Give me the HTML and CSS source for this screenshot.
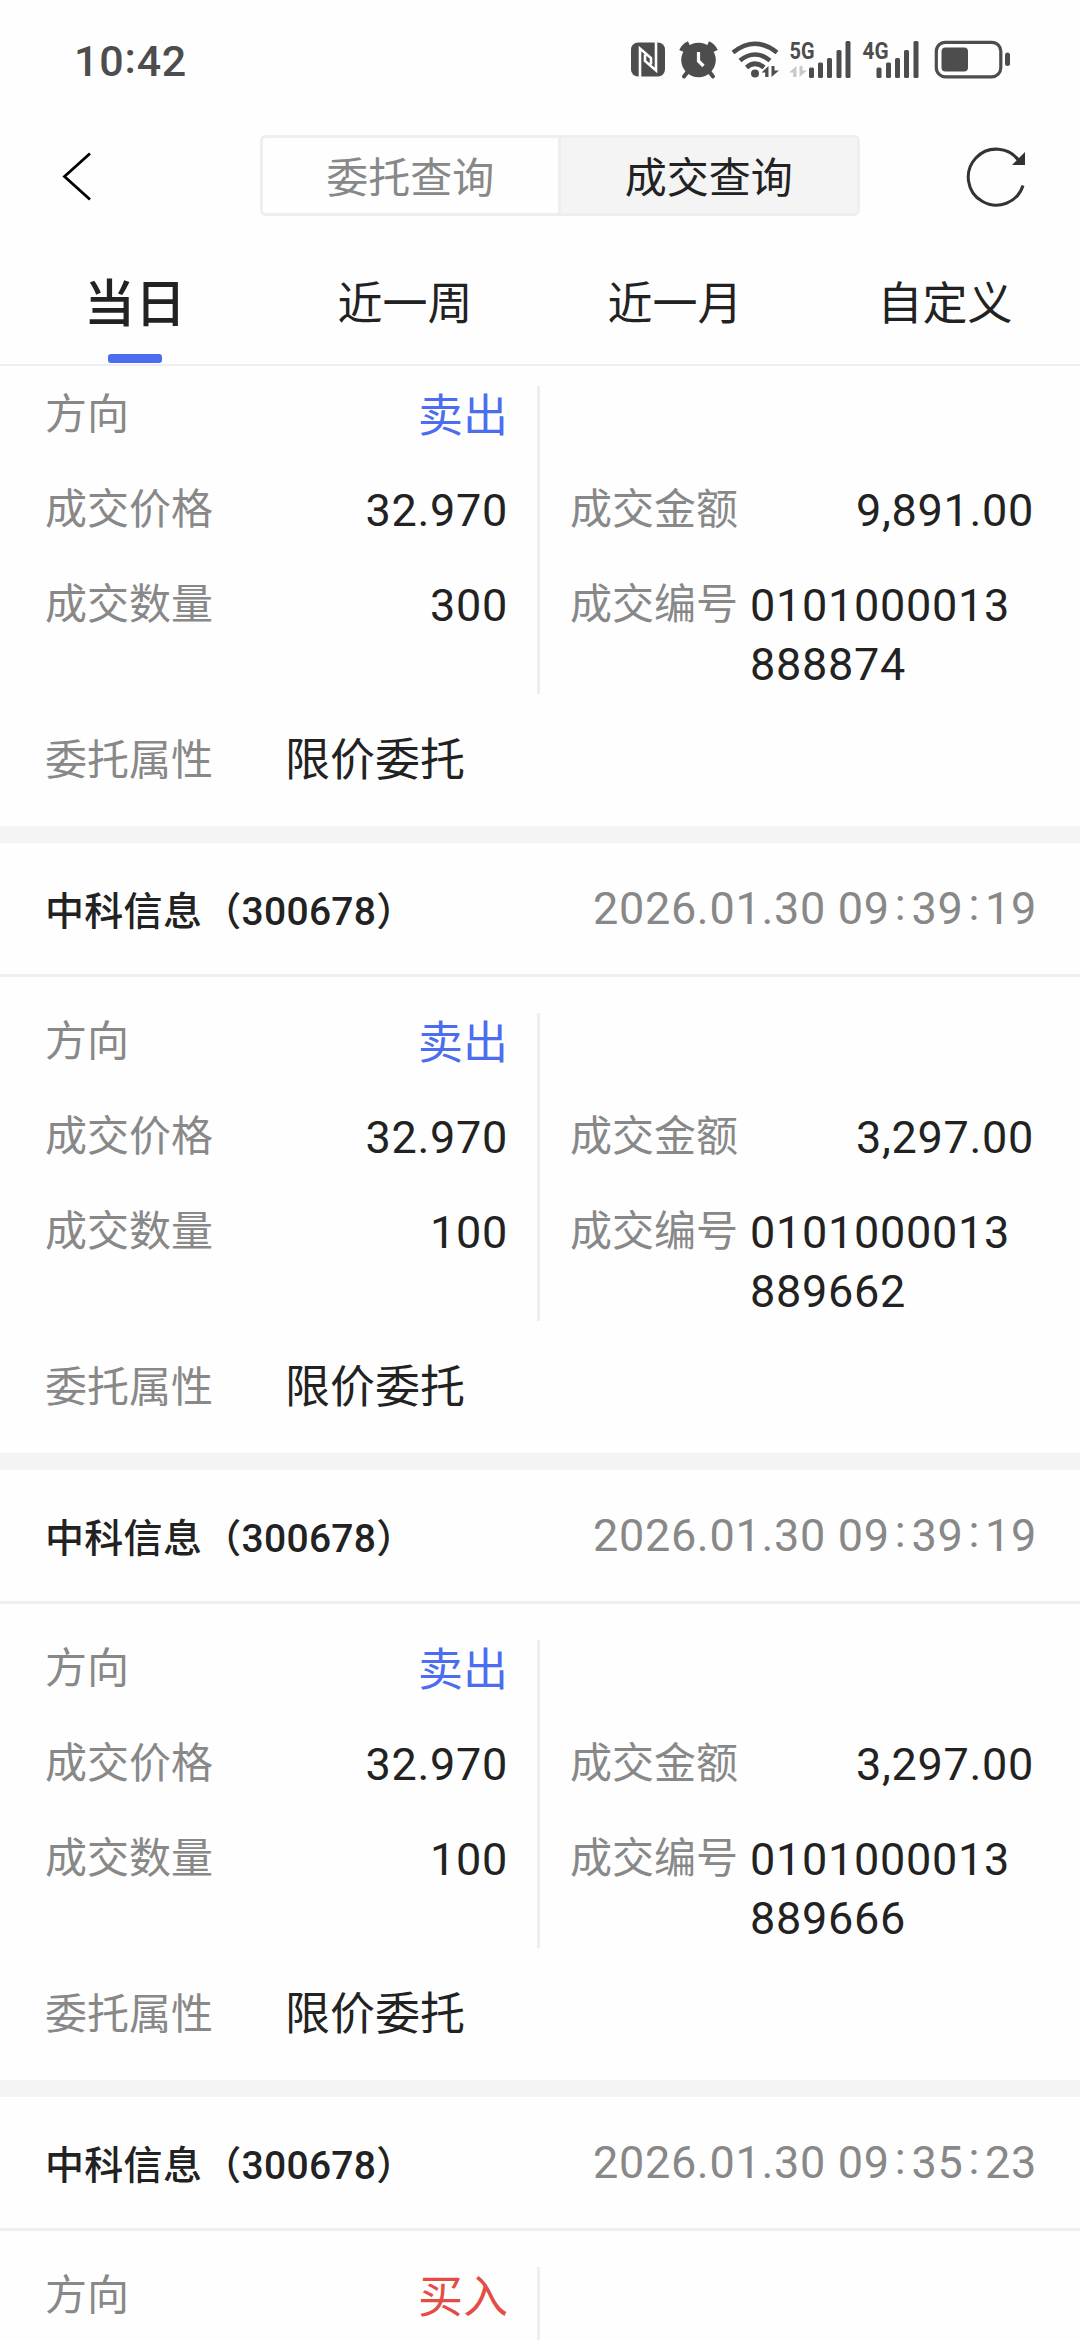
FILE: index.html
```
<!DOCTYPE html>
<html lang="zh-CN">
<head>
    <meta charset="UTF-8">
    <meta name="viewport" content="width=device-width, initial-scale=1.0">
    <title>成交查询</title>
    <link rel="stylesheet" href="styles.css">
</head>
<body>
    <div class="status-bar">
        <div class="clock">10<span class="colon">:</span>42</div>
        <div class="status-icons">
            <!-- NFC -->
            <svg class="nfc" width="34" height="40" viewBox="0 0 34 40">
                <rect x="0" y="2.5" width="34" height="34" rx="7" fill="#4d4d4d"/>
                <path d="M9 37V8.500L20 18V24.500M25 2V30.500L14 21V14.500" fill="none" stroke="#fefefe" stroke-width="2.600"/>
            </svg>
            <!-- alarm -->
            <svg class="alarm" width="39" height="40" viewBox="0 0 39 40">
                <circle cx="19.500" cy="20" r="17.300" fill="#4d4d4d"/>
                <path d="M2.500 11A15 15 0 0 1 10 3.500M29 3.500A15 15 0 0 1 36.500 11" fill="none" stroke="#4d4d4d" stroke-width="5"/>
                <path d="M8.500 32L5 36.500M30.500 32L34 36.500" stroke="#4d4d4d" stroke-width="4" stroke-linecap="round"/>
                <path d="M19.500 12V21L24.500 26" fill="none" stroke="#fefefe" stroke-width="3.200"/>
            </svg>
            <!-- wifi -->
            <svg class="wifi" width="49" height="40" viewBox="0 0 49 40">
                <g fill="none" stroke="#4d4d4d" stroke-width="4.600">
                    <path d="M2 12.500Q24 -5 46 12.500"/>
                    <path d="M9 20.500Q24 8.500 39 20.500"/>
                    <path d="M15.500 27.500Q24 20 33 27.500"/>
                </g>
                <circle cx="24" cy="33.500" r="4" fill="#4d4d4d"/>
                <path d="M37.500 26V37H34.200V32.500H30.500ZM40.500 37V26H43.500V30.500H48Z" fill="#4d4d4d"/>
            </svg>
            <!-- 5G signal -->
            <svg class="signal-5g" width="63" height="40" viewBox="0 0 63 40">
                <text x="0.500" y="18.500" class="net" textLength="25" lengthAdjust="spacingAndGlyphs">5G</text>
                <path d="M7.500 26V37H4.200V32.500H0ZM10.500 37V26H13.500V30.500H18Z" fill="#c9c9c9"/>
                <g fill="#4d4d4d">
                    <rect x="20" y="27.500" width="5" height="10.500" rx="1.500"/>
                    <rect x="29" y="22.500" width="5" height="15.500" rx="1.500"/>
                    <rect x="38" y="18" width="5" height="20" rx="1.500"/>
                    <rect x="47.500" y="10" width="5" height="28" rx="1.500"/>
                    <rect x="56.500" y="1" width="5" height="37" rx="1.500"/>
                </g>
            </svg>
            <!-- 4G signal -->
            <svg class="signal-4g" width="58" height="40" viewBox="0 0 58 40">
                <text x="0.500" y="18.500" class="net" textLength="26" lengthAdjust="spacingAndGlyphs">4G</text>
                <g fill="#4d4d4d">
                    <rect x="14.500" y="27.500" width="5" height="10.500" rx="1.500"/>
                    <rect x="24" y="22.500" width="5" height="15.500" rx="1.500"/>
                    <rect x="33" y="18" width="5" height="20" rx="1.500"/>
                    <rect x="42" y="10" width="5" height="28" rx="1.500"/>
                    <rect x="51.500" y="1" width="5" height="37" rx="1.500"/>
                </g>
            </svg>
            <!-- battery -->
            <svg class="battery" width="77" height="40" viewBox="0 0 77 40">
                <rect x="2.300" y="2.300" width="64.500" height="34.500" rx="9" fill="none" stroke="#4d4d4d" stroke-width="3.200"/>
                <rect x="7.500" y="7.500" width="26.500" height="24" rx="4" fill="#4d4d4d"/>
                <rect x="71" y="12.500" width="5" height="13.500" rx="2.500" fill="#4d4d4d"/>
            </svg>
        </div>
    </div>

    <div class="nav-bar">
        <svg class="back" width="30" height="50" viewBox="0 0 30 50">
            <path d="M28 2.500L2.500 25.500L28 48.500" fill="none" stroke="#000" stroke-width="2.800"/>
        </svg>
        <div class="segment">
            <div class="segment-item">委托查询</div>
            <div class="segment-item active">成交查询</div>
        </div>
        <svg class="refresh" width="60" height="62" viewBox="0 0 60 62">
            <path d="M56 40.500A28 28 0 1 1 52.500 16.500" fill="none" stroke="#333" stroke-width="3"/>
            <path d="M58 7V20H45Z" fill="#333"/>
        </svg>
    </div>

    <div class="tabs">
        <div class="tab active">当日</div>
        <div class="tab">近一周</div>
        <div class="tab">近一月</div>
        <div class="tab">自定义</div>
    </div>

    <div class="list">
        <div class="card scrolled">
            <div class="detail">
                <div class="col left">
                    <div class="row"><span class="label">方向</span><span class="value sell">卖出</span></div>
                    <div class="row"><span class="label">成交价格</span><span class="value">32.970</span></div>
                    <div class="row"><span class="label">成交数量</span><span class="value">300</span></div>
                </div>
                <div class="col right">
                    <div class="row"></div>
                    <div class="row"><span class="label">成交金额</span><span class="value">9,891.00</span></div>
                    <div class="row"><span class="label">成交编号</span><span class="value serial">0101000013888874</span></div>
                </div>
            </div>
            <div class="attr"><span class="label">委托属性</span><span class="value">限价委托</span></div>
        </div>

        <div class="card">
            <div class="card-head">
                <span class="stock">中科信息（300678）</span>
                <span class="time">2026.01.30 09<i>:</i>39<i>:</i>19</span>
            </div>
            <div class="detail">
                <div class="col left">
                    <div class="row"><span class="label">方向</span><span class="value sell">卖出</span></div>
                    <div class="row"><span class="label">成交价格</span><span class="value">32.970</span></div>
                    <div class="row"><span class="label">成交数量</span><span class="value">100</span></div>
                </div>
                <div class="col right">
                    <div class="row"></div>
                    <div class="row"><span class="label">成交金额</span><span class="value">3,297.00</span></div>
                    <div class="row"><span class="label">成交编号</span><span class="value serial">0101000013889662</span></div>
                </div>
            </div>
            <div class="attr"><span class="label">委托属性</span><span class="value">限价委托</span></div>
        </div>

        <div class="card">
            <div class="card-head">
                <span class="stock">中科信息（300678）</span>
                <span class="time">2026.01.30 09<i>:</i>39<i>:</i>19</span>
            </div>
            <div class="detail">
                <div class="col left">
                    <div class="row"><span class="label">方向</span><span class="value sell">卖出</span></div>
                    <div class="row"><span class="label">成交价格</span><span class="value">32.970</span></div>
                    <div class="row"><span class="label">成交数量</span><span class="value">100</span></div>
                </div>
                <div class="col right">
                    <div class="row"></div>
                    <div class="row"><span class="label">成交金额</span><span class="value">3,297.00</span></div>
                    <div class="row"><span class="label">成交编号</span><span class="value serial">0101000013889666</span></div>
                </div>
            </div>
            <div class="attr"><span class="label">委托属性</span><span class="value">限价委托</span></div>
        </div>

        <div class="card">
            <div class="card-head">
                <span class="stock">中科信息（300678）</span>
                <span class="time">2026.01.30 09<i>:</i>35<i>:</i>23</span>
            </div>
            <div class="detail">
                <div class="col left">
                    <div class="row"><span class="label">方向</span><span class="value buy">买入</span></div>
                </div>
            </div>
        </div>
    </div>
</body>
</html>
```
FILE: styles.css
```
* {
    box-sizing: border-box;
    margin: 0;
    padding: 0;
}

body {
    display: flex;
    flex-direction: column;
    width: 1080px;
    height: 2340px;
    overflow: hidden;
    background: #fefefe;
    color: #222;
    font-family: Roboto, "Noto Sans CJK SC", sans-serif;
}

svg {
    display: block;
    flex: none;
    overflow: visible;
}

/* status bar */
.status-bar {
    display: flex;
    justify-content: space-between;
    height: 120px;
    padding: 40px 69px 0 74px;
}

.clock {
    height: 40px;
    line-height: 40px;
    margin-top: -3px;
    font-size: 43px;
    font-weight: 500;
    letter-spacing: 0.8px;
    color: #4d4d4d;
}

.clock .colon {
    vertical-align: 3px;
    line-height: 1;
}

.status-icons {
    display: flex;
}

.alarm {
    margin-left: 14px;
}

.wifi {
    margin-left: 13px;
}

.signal-5g {
    margin-left: 9px;
}

.signal-4g {
    margin-left: 10px;
}

.battery {
    margin-left: 14px;
}

.net {
    font-size: 24px;
    font-weight: 700;
    fill: #4d4d4d;
}

/* title bar */
.nav-bar {
    display: flex;
    align-items: center;
    justify-content: space-between;
    height: 111px;
    padding: 0 53px 0 62px;
}

.segment {
    display: flex;
    width: 600px;
    height: 81px;
    margin-left: 60px;
    border: 3px solid #eee;
    border-radius: 6px;
}

.segment-item {
    flex: 1;
    height: 75px;
    font-size: 42px;
    line-height: 82px;
    text-align: center;
    color: #888;
}

.segment-item.active {
    border-left: 3px solid #eee;
    background: #f4f4f4;
    color: #222;
}

/* period tabs */
.tabs {
    display: flex;
    height: 135px;
    border-bottom: 2px solid #eee;
}

.tab {
    position: relative;
    flex: 1;
    padding-top: 38px;
    font-size: 45px;
    line-height: 71px;
    text-align: center;
}

.tab.active {
    font-size: 51px;
    font-weight: 500;
}

.tab.active::after {
    content: "";
    position: absolute;
    left: 108px;
    bottom: 1px;
    width: 54px;
    height: 9px;
    border-radius: 3px;
    background: #4c6df0;
}

/* deals */
.list {
    flex: 1;
    overflow: hidden;
}

.card {
    height: 627px;
    border-bottom: 17px solid #f4f4f4;
}

.card.scrolled {
    height: 477px;
    padding-top: 20px;
}

.card-head {
    display: flex;
    align-items: center;
    justify-content: space-between;
    height: 134px;
    margin-bottom: 36px;
    padding: 0 43px 0 45px;
    border-bottom: 3px solid #eee;
}

.stock {
    padding-bottom: 2px;
    font-size: 39px;
    font-weight: 500;
    letter-spacing: 0.3px;
}

.time {
    font-size: 45px;
    letter-spacing: 0.7px;
    color: #888;
}

.time i {
    padding: 0 5px;
    font-style: normal;
    line-height: 1;
    vertical-align: 4px;
}

.detail {
    display: flex;
    height: 308px;
}

.col {
    display: flex;
    flex-direction: column;
    gap: 36px;
}

.col.left {
    width: 540px;
    padding: 0 29px 0 45px;
    border-right: 3px solid #eee;
}

.col.right {
    width: 540px;
    padding: 0 46px 0 30px;
}

/* the serial number wraps below its row */
.row {
    display: flex;
    justify-content: space-between;
    height: 59px;
    line-height: 59px;
}

.row .label {
    line-height: 57px;
}

.label {
    flex: none;
    font-size: 42px;
    color: #888;
}

.value {
    font-size: 45px;
    letter-spacing: 0.7px;
}

.serial {
    width: 284px;
    word-break: break-all;
}

.sell,
.buy {
    line-height: 61px;
    letter-spacing: 0;
}

.sell {
    color: #4c6df0;
}

.buy {
    color: #e34d45;
}

.attr {
    display: flex;
    margin-top: 37px;
    padding-left: 45px;
    line-height: 59px;
}

.attr .value {
    margin-left: 72px;
    letter-spacing: 0;
}
```
